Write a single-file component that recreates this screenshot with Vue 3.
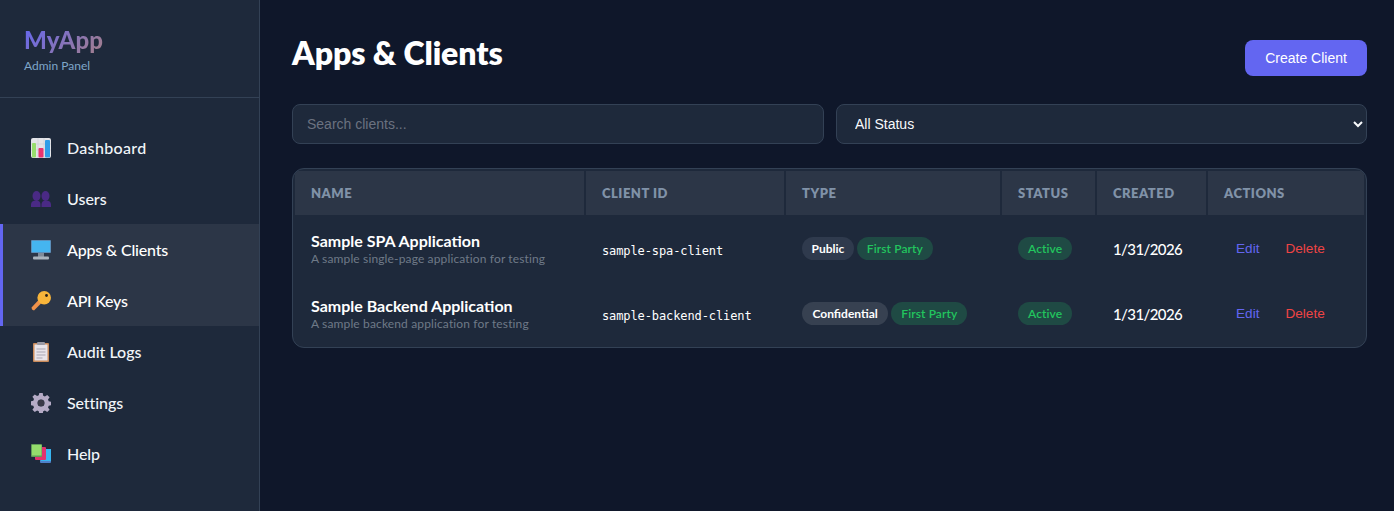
<script setup>
const rows = [
  { name: 'Sample SPA Application', desc: 'A sample single-page application for testing', id: 'sample-spa-client', type: 'Public' },
  { name: 'Sample Backend Application', desc: 'A sample backend application for testing', id: 'sample-backend-client', type: 'Confidential' }
]
const nav = [
  { key: 'dash', label: 'Dashboard' },
  { key: 'users', label: 'Users' },
  { key: 'apps', label: 'Apps & Clients', active: true },
  { key: 'keys', label: 'API Keys', active: true },
  { key: 'audit', label: 'Audit Logs' },
  { key: 'settings', label: 'Settings' },
  { key: 'help', label: 'Help' }
]
const cols = ['Name', 'Client ID', 'Type', 'Status', 'Created', 'Actions']
</script>

<template>
  <div class="layout">
    <aside class="sidebar">
      <div class="brand">
        <div class="logo">MyApp</div>
        <div class="tag">Admin Panel</div>
      </div>
      <nav class="nav">
        <a v-for="n in nav" :key="n.key" class="item" :class="[n.key, { active: n.active }]">
          <svg class="ico" viewBox="0 0 20 20" aria-hidden="true">
            <template v-if="n.key === 'dash'">
              <rect x="0" y="0" width="20" height="20" rx="2" fill="#e3e4e8" />
              <path d="M0 6h20M0 12h20M7 0v20M13 0v20" stroke="#c9ccd4" stroke-width=".6" />
              <rect x="1" y="5" width="4" height="14.500" rx="1" fill="#97dd6c" />
              <rect x="7.500" y="10" width="5" height="9.500" rx="1" fill="#e8336f" />
              <rect x="14" y="2" width="5" height="17.500" rx="1" fill="#2f9de8" />
            </template>
            <template v-else-if="n.key === 'users'">
              <g fill="#4a2a85">
                <ellipse cx="5.500" cy="7" rx="4" ry="5" />
                <ellipse cx="14.500" cy="7" rx="4" ry="5" />
                <path d="M0 18v-2.500c0-2.500 2-4 5-4s4.500 1.500 4.500 4V18zM10.500 18v-2.500c0-2.500 1.500-4 4.500-4s5 1.500 5 4V18z" />
              </g>
            </template>
            <template v-else-if="n.key === 'apps'">
              <rect x="0" y="0" width="20" height="13" rx="1" fill="#5b8fbb" />
              <rect x="1" y="1" width="18" height="11" fill="#45b5f0" />
              <rect x="7" y="13" width="6" height="4" fill="#7f8a98" />
              <rect x="2" y="16.500" width="16" height="3" rx="1" fill="#a9b3bd" />
            </template>
            <template v-else-if="n.key === 'keys'">
              <path d="M9 7.500 .5 16.500 1 18.500l2 1 8.500-8.500z" fill="#f0924a" />
              <circle cx="13.200" cy="6.800" r="6.800" fill="#f8b53a" />
              <circle cx="15.500" cy="4.500" r="1.400" fill="#2a2118" />
            </template>
            <template v-else-if="n.key === 'audit'">
              <rect x="2" y="1" width="16" height="19" rx="1" fill="#c98a5a" />
              <rect x="3.500" y="2.500" width="13" height="16" fill="#e8e4ea" />
              <rect x="6" y="0" width="8" height="3" rx="1" fill="#9a9aa5" />
              <path d="M5.500 7h9M5.500 10h9M5.500 13h9M5.500 16h6" stroke="#a9a6b3" stroke-width="1" />
            </template>
            <template v-else-if="n.key === 'settings'">
              <path fill="#b5abc6" fill-rule="evenodd" d="M8.300 0h3.400l.5 2.800 1.700.7 2.300-1.600 2.400 2.400-1.600 2.300.7 1.700 2.800.5v3.400l-2.800.5-.7 1.700 1.600 2.300-2.400 2.400-2.300-1.600-1.700.7-.5 2.800H8.300l-.5-2.800-1.700-.7-2.300 1.600-2.400-2.400 1.600-2.300-.7-1.700-2.800-.5V8.300l2.800-.5.7-1.700-1.600-2.300 2.400-2.400 2.300 1.600 1.700-.7zM10 6.500a3.500 3.500 0 1 0 0 7 3.500 3.500 0 0 0 0-7z" />
              <circle cx="10" cy="10" r="3.200" fill="#3a3a48" />
            </template>
            <template v-else>
              <rect x="9" y="5" width="11" height="14" rx="1" fill="#4f7fc9" />
              <rect x="10" y="5" width="10" height="12" fill="#38b6f1" />
              <rect x="4" y="3" width="11" height="13" rx="1" fill="#e0336e" />
              <rect x="0" y="0" width="11" height="13" rx="1" fill="#5f9c58" />
              <rect x="1" y="1" width="9.500" height="10.500" fill="#94dc6c" />
            </template>
          </svg>
          <span>{{ n.label }}</span>
        </a>
      </nav>
    </aside>

    <main class="main">
      <header class="head">
        <h1 class="title">Apps &amp; Clients</h1>
        <button class="create">Create Client</button>
      </header>

      <div class="filters">
        <input class="field" placeholder="Search clients..." />
        <select class="field select">
          <option>All Status</option>
        </select>
      </div>

      <div class="card">
        <table class="table">
          <colgroup>
            <col class="c1" /><col class="c2" /><col class="c3" /><col class="c4" /><col class="c5" /><col class="c6" />
          </colgroup>
          <thead>
            <tr><th v-for="c in cols" :key="c">{{ c }}</th></tr>
          </thead>
          <tbody>
            <tr v-for="r in rows" :key="r.id">
              <td>
                <div class="name">{{ r.name }}</div>
                <div class="desc">{{ r.desc }}</div>
              </td>
              <td class="idcell"><code class="cid">{{ r.id }}</code></td>
              <td>
                <div class="badges">
                  <span class="badge neutral" :class="{ conf: r.type === 'Confidential' }">{{ r.type }}</span>
                  <span class="badge green">First Party</span>
                </div>
              </td>
              <td><span class="badge green">Active</span></td>
              <td class="date">1/31/2026</td>
              <td>
                <div class="acts">
                  <button class="act edit">Edit</button>
                  <button class="act del">Delete</button>
                </div>
              </td>
            </tr>
          </tbody>
        </table>
      </div>
    </main>
  </div>
</template>

<style>
html, body { margin: 0; background: #0f172a; overflow: hidden; }
</style>

<style scoped>
.layout { display: flex; height: 100vh; background: #0f172a; font-family: Lato, "Open Sans", sans-serif; color: #f8fafc; }
.sidebar { width: 259px; flex: none; background: #1e293b; border-right: 1px solid #334155; }
.brand { height: 73px; padding: 24px 24px 0; border-bottom: 1px solid #334155; width: 211px; }
.logo { font-size: 24px; font-weight: 900; line-height: 32px; letter-spacing: .1px; background: linear-gradient(135deg, #6366f1, #f59e0b); -webkit-background-clip: text; background-clip: text; color: transparent; }
.tag { font-size: 12px; line-height: 16px; margin-top: 2px; color: #7fa6c9; }
.nav { padding-top: 24px; display: flex; flex-direction: column; }
.item { display: flex; align-items: center; gap: 16px; height: 51px; padding-left: 31px; font-size: 16px; font-weight: 500; color: #f1f5f9; box-sizing: border-box; }
.item.active { background: #2c3647; border-left: 3px solid #6366f1; padding-left: 28px; color: #fff; }
.dash span { letter-spacing: .33px; }
.apps span { letter-spacing: -.2px; }
.keys span { letter-spacing: -.25px; }
.settings span, .help span { letter-spacing: -.1px; }
.ico { width: 20px; height: 20px; flex: none; }
.main { flex: 1; min-width: 0; padding: 32px 27px 0 32px; }
.head { display: flex; justify-content: space-between; align-items: flex-end; height: 44px; margin-bottom: 28px; }
.title { margin: 0; font-size: 32px; font-weight: 800; line-height: 42px; letter-spacing: -.08px; color: #fff; align-self: flex-start; }
.create { width: 122px; height: 36px; border: none; border-radius: 8px; background: #6366f1; color: #fff; font: 14px "Liberation Sans", Arial, sans-serif; padding: 0; }
.filters { display: grid; grid-template-columns: 532px 531px; gap: 12px; margin-bottom: 24px; }
.field { height: 40px; box-sizing: border-box; background: #1e293b; border: 1px solid #334155; border-radius: 8px; padding: 0 14px; color: #f8fafc; font: 14px "Liberation Sans", Arial, sans-serif; outline: none; }
.field::placeholder { color: #6b7280; }
.select { color-scheme: dark; }
.card { width: 1075px; box-sizing: border-box; background: #1e293b; border: 1px solid #334155; border-radius: 12px; overflow: hidden; }
.table { width: 100%; table-layout: fixed; border-collapse: separate; border-spacing: 2px; }
.c1 { width: 289px; } .c2 { width: 198px; } .c3 { width: 214px; } .c4 { width: 93px; } .c5 { width: 109px; } .c6 { width: 156px; }
th { height: 44px; box-sizing: border-box; padding: 0 16px; background: #2c3647; text-align: left; font-size: 13px; font-weight: 800; letter-spacing: .5px; text-transform: uppercase; color: #8092a8; }
td { height: 63px; box-sizing: border-box; padding: 0 16px; vertical-align: middle; font-size: 14px; }
.name { font-size: 16px; font-weight: 700; line-height: 19px; color: #fff; margin-bottom: 1px; }
.desc { font-size: 12px; line-height: 15px; letter-spacing: .14px; color: #6f7a88; }
.idcell { padding-top: 2px; }
.cid { font-family: "DejaVu Sans Mono", monospace; font-size: 12px; letter-spacing: -.1px; color: #fff; }
.badges { display: flex; gap: 3px; }
.badge { display: inline-block; height: 23px; line-height: 23px; padding: 0 10px; border-radius: 12px; font-size: 12px; font-weight: 700; white-space: nowrap; }
.neutral { background: #2f3a4d; color: #fff; padding: 0 9.5px; }
.neutral.conf { background: #374151; padding: 0 10.5px; }
.green { background: #1f4a44; color: #22c55e; font-weight: 600; letter-spacing: .1px; }
.date { font-size: 15px; font-weight: 500; letter-spacing: -.6px; color: #fff; }
.acts { display: flex; gap: 2px; }
.act { background: none; border: none; padding: 0 12px; font: 13.6px "Liberation Sans", Arial, sans-serif; }
.edit { color: #6366f1; }
.del { color: #ef4444; }
</style>
